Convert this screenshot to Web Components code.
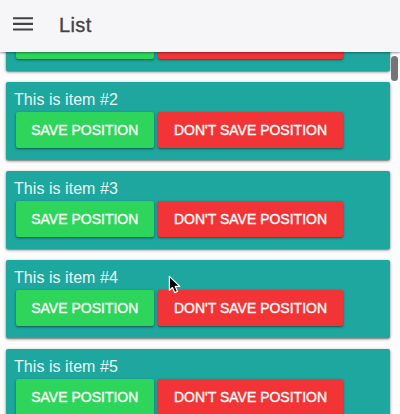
<!DOCTYPE html>
<html lang="en">
<head>
<meta charset="utf-8">
<title>List</title>
<style>
html, body { margin: 0; height: 100%; overflow: hidden; background: #fdfcfd; font-family: "Liberation Sans", Arial, sans-serif; }
</style>
</head>
<body>
<list-page></list-page>
<script>
class PageHeader extends HTMLElement {
  constructor() {
    super();
    this.attachShadow({ mode: 'open' }).innerHTML = `
      <style>
        :host { display: flex; align-items: center; box-sizing: border-box; height: 52px; flex: none; padding: 0 13px; gap: 26px;
          background: #f6f5f7; color: #434345; box-shadow: 0 1px 2px rgba(0,0,0,.4); position: relative; z-index: 1; }
        svg { display: block; margin-bottom: 4px; }
        h1 { margin: 0 0 2px; font-size: 20px; line-height: 24px; font-weight: 400; letter-spacing: .4px; -webkit-text-stroke: .35px currentColor; }
      </style>
      <svg width="20" height="14" viewBox="0 0 20 14" fill="#434345"><path d="M0 .2h20v2.1H0zM0 5.8h20v2.1H0zM0 11.4h20v2.1H0z"/></svg>
      <h1><slot></slot></h1>`;
  }
}
customElements.define('page-header', PageHeader);

class ActionButton extends HTMLElement {
  constructor() {
    super();
    this.attachShadow({ mode: 'open' }).innerHTML = `
      <style>
        :host { display: flex; width: 137.6px; height: 36px; border-radius: 2px; background: #2dd55b; box-shadow: 0 1px 3px rgba(0,0,0,.42), 0 1px 1px rgba(0,0,0,.12); }
        :host([kind="danger"]) { width: 185.8px; background: #f33436; }
        button { flex: 1; display: flex; align-items: center; justify-content: center; border: 0; padding: 0; margin: 0; background: none;
          color: #f5faf7; font: 14px/18px "Liberation Sans", Arial, sans-serif; white-space: nowrap; text-transform: uppercase; -webkit-text-stroke: .4px currentColor; }
      </style>
      <button><slot></slot></button>`;
  }
}
customElements.define('action-button', ActionButton);

class ItemCard extends HTMLElement {
  constructor() {
    super();
    // A card marked "leaving" shows only its bottom edge, so it carries no captions.
    const leaving = this.hasAttribute('leaving');
    this.attachShadow({ mode: 'open' }).innerHTML = `
      <style>
        :host { display: block; box-sizing: border-box; height: 78.4px; flex: none; padding: 8px 8px 0; border-radius: 2px;
          background: #1ea79f; color: #e6f6f4; box-shadow: 0 1px 3px rgba(0,0,0,.5), 0 1px 1px rgba(0,0,0,.15); }
        .label { font-size: 16px; line-height: 20px; height: 22px; white-space: nowrap; letter-spacing: .05px; }
        .row { display: flex; gap: 4px; padding-left: 2px; }
      </style>
      <div class="label"><slot></slot></div>
      <div class="row"><action-button>${leaving ? '' : 'Save position'}</action-button><action-button kind="danger">${leaving ? '' : "Don't save position"}</action-button></div>`;
  }
}
customElements.define('item-card', ItemCard);

class ListPage extends HTMLElement {
  constructor() {
    super();
    this.attachShadow({ mode: 'open' }).innerHTML = `
      <style>
        :host { display: flex; flex-direction: column; height: 100%; position: relative; overflow: hidden; }
        main { flex: 1; min-height: 0; overflow: hidden; }
        .items { display: flex; flex-direction: column; gap: 10.6px; margin: -59px 10px 0 6px; }
        .thumb { position: absolute; right: 2px; top: 56px; width: 7px; height: 25px; border-radius: 4px; background: #757575; }
        .cursor { position: absolute; left: 168px; top: 275px; z-index: 2; }
      </style>
      <page-header>List</page-header>
      <main><div class="items">
        <item-card leaving></item-card>
        <item-card>This is item #2</item-card>
        <item-card>This is item #3</item-card>
        <item-card>This is item #4</item-card>
        <item-card>This is item #5</item-card>
      </div></main>
      <div class="thumb"></div>
      <svg class="cursor" width="13" height="20" viewBox="0 0 13 20"><path d="M1.4 1.4V15.2L4.5 12.4L6.7 17.6L9.5 16.4L7.3 11.4H11.8Z" fill="#000" stroke="#fff" stroke-width="1.2" stroke-linejoin="round"/></svg>`;
  }
}
customElements.define('list-page', ListPage);
</script>
</body>
</html>
